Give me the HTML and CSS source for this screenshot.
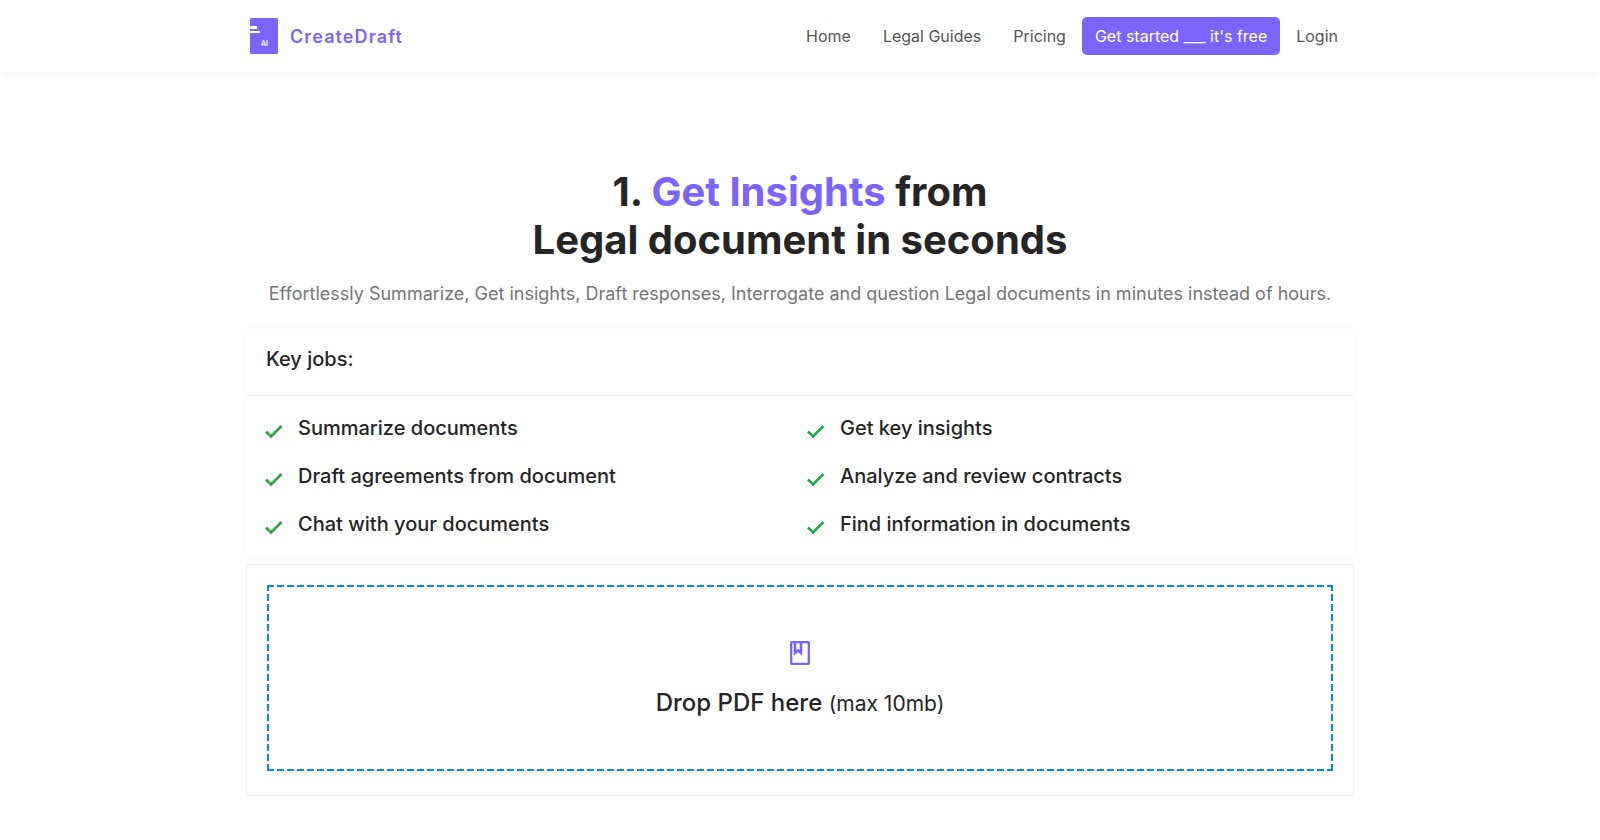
FILE: index.html
```html
<!DOCTYPE html>
<html lang="en">
<head>
    <meta charset="UTF-8">
    <meta name="viewport" content="width=device-width, initial-scale=1.0">
    <title>CreateDraft</title>
    <link rel="stylesheet" href="styles.css">
</head>
<body>
    <nav class="navbar">
        <div class="navbar-inner">
            <a class="brand" href="#">
                <svg class="brand-icon" width="28" height="36" viewBox="0 0 28 36">
                    <rect width="28" height="36" rx="1.5" fill="#7b63fc"/>
                    <rect x="0" y="8" width="7" height="3" fill="#fff"/>
                    <rect x="0" y="13" width="10" height="2" fill="#fff"/>
                    <text x="11" y="28" class="brand-ai">AI</text>
                </svg>
                <span class="brand-name">CreateDraft</span>
            </a>
            <ul class="nav-links">
                <li><a href="#">Home</a></li>
                <li><a href="#">Legal Guides</a></li>
                <li><a href="#">Pricing</a></li>
                <li><a class="nav-cta" href="#">Get started ___ it's free</a></li>
                <li><a href="#">Login</a></li>
            </ul>
        </div>
    </nav>

    <main class="main">
        <h1 class="title">1. <span class="accent">Get Insights</span> from<br>Legal document in seconds</h1>
        <p class="lead">Effortlessly Summarize, Get insights, Draft responses, Interrogate and question Legal documents in minutes instead of hours.</p>

        <section class="jobs-card">
            <div class="jobs-header">Key jobs:</div>
            <ul class="jobs-list">
                <li><svg class="check" viewBox="0 0 18 18"><path d="M0 9.5l5 5L15.500 4"/></svg>Summarize documents</li>
                <li><svg class="check" viewBox="0 0 18 18"><path d="M0 9.5l5 5L15.500 4"/></svg>Get key insights</li>
                <li><svg class="check" viewBox="0 0 18 18"><path d="M0 9.5l5 5L15.500 4"/></svg>Draft agreements from document</li>
                <li><svg class="check" viewBox="0 0 18 18"><path d="M0 9.5l5 5L15.500 4"/></svg>Analyze and review contracts</li>
                <li><svg class="check" viewBox="0 0 18 18"><path d="M0 9.5l5 5L15.500 4"/></svg>Chat with your documents</li>
                <li><svg class="check" viewBox="0 0 18 18"><path d="M0 9.5l5 5L15.500 4"/></svg>Find information in documents</li>
            </ul>
        </section>

        <section class="upload-card">
            <div class="dropzone">
                <svg class="book" width="20" height="24" viewBox="0 0 20 24">
                    <rect x="1" y="1" width="18" height="22" rx="2"/>
                    <path d="M5 1v11l3-2.5 3 2.5V1"/>
                </svg>
                <p class="drop-text">Drop PDF here <small>(max 10mb)</small></p>
            </div>
        </section>
    </main>
</body>
</html>
```

FILE: styles.css
```css
:root {
    --primary-color: #7b63fc;
    --text-color: #252525;
    --muted-color: #757575;
    --border-color: #f0f0f0;
    --dash-color: #0088ff;
}

* {
    box-sizing: border-box;
}

body {
    font-family: Inter, "Liberation Sans", Arial, sans-serif;
    margin: 0;
    background-color: #fff;
    color: var(--text-color);
}

.navbar {
    height: 72px;
    background: #fff;
    box-shadow: 0 2px 8px rgba(0,0,0,0.06);
}

.navbar-inner {
    width: 1108px;
    height: 100%;
    margin: 0 auto;
    padding-left: 4px;
    display: flex;
    align-items: center;
    justify-content: space-between;
}

.brand {
    display: flex;
    align-items: center;
    gap: 12px;
    text-decoration: none;
}

.brand-icon {
    display: block;
}

.brand-ai {
    font-size: 7px;
    font-weight: 600;
    fill: #fff;
}

.brand-name {
    font-size: 18px;
    font-weight: 600;
    letter-spacing: 1.1px;
    color: var(--primary-color);
}

.nav-links {
    display: flex;
    align-items: center;
    list-style: none;
    margin: 0;
    padding: 0;
}

.nav-links a {
    display: block;
    padding: 8px 16px;
    font-size: 16px;
    line-height: 24px;
    color: #555;
    text-decoration: none;
}

.nav-links .nav-cta {
    padding: 7px 13px;
    background: var(--primary-color);
    border-radius: 5px;
    color: #fff;
}

.main {
    width: 1108px;
    margin: 0 auto;
    padding-top: 96px;
}

.title {
    margin: 0;
    text-align: center;
    font-size: 40px;
    line-height: 48px;
    font-weight: 700;
}

.accent {
    color: var(--primary-color);
}

.lead {
    margin: 16px 0 0;
    text-align: center;
    font-size: 18px;
    line-height: 27px;
    color: var(--muted-color);
}

.jobs-card {
    margin-top: 22px;
    border-radius: 6px;
    box-shadow: 0 0 8px rgba(0,0,0,0.04);
}

.jobs-header {
    height: 67px;
    padding: 0 20px 6px;
    display: flex;
    align-items: center;
    font-size: 20px;
    font-weight: 500;
    border-bottom: 1px solid var(--border-color);
}

.jobs-list {
    display: grid;
    grid-template-columns: 542px 1fr;
    row-gap: 18px;
    list-style: none;
    margin: 0;
    padding: 17px 20px 19px;
}

.jobs-list li {
    display: flex;
    align-items: center;
    gap: 14px;
    font-size: 20px;
    line-height: 30px;
    font-weight: 500;
}

.check {
    width: 18px;
    height: 18px;
    margin-top: 6px;
    fill: none;
    stroke: #28a745;
    stroke-width: 2.6;
    overflow: visible;
}

.upload-card {
    margin-top: 6px;
    padding: 20px 20px 24px;
    border: 1px solid var(--border-color);
    border-radius: 4px;
}

/* border: dashed draws the dashes too short, so they are backgrounds */
.dropzone {
    height: 186px;
    padding-top: 56px;
    display: flex;
    flex-direction: column;
    align-items: center;
    background:
        repeating-linear-gradient(90deg, var(--dash-color) 0 7px, transparent 7px 10px) top / 100% 2px no-repeat,
        repeating-linear-gradient(90deg, var(--dash-color) 0 7px, transparent 7px 10px) bottom / 100% 2px no-repeat,
        repeating-linear-gradient(0deg, var(--dash-color) 0 7px, transparent 7px 10px) left / 2px 100% no-repeat,
        repeating-linear-gradient(0deg, var(--dash-color) 0 7px, transparent 7px 10px) right / 2px 100% no-repeat;
}

.book {
    fill: none;
    stroke: var(--primary-color);
    stroke-width: 2.6;
}

.drop-text {
    margin: 20px 0 0;
    font-size: 24px;
    line-height: 36px;
    font-weight: 500;
}

.drop-text small {
    font-size: 21px;
    font-weight: 400;
}
```
